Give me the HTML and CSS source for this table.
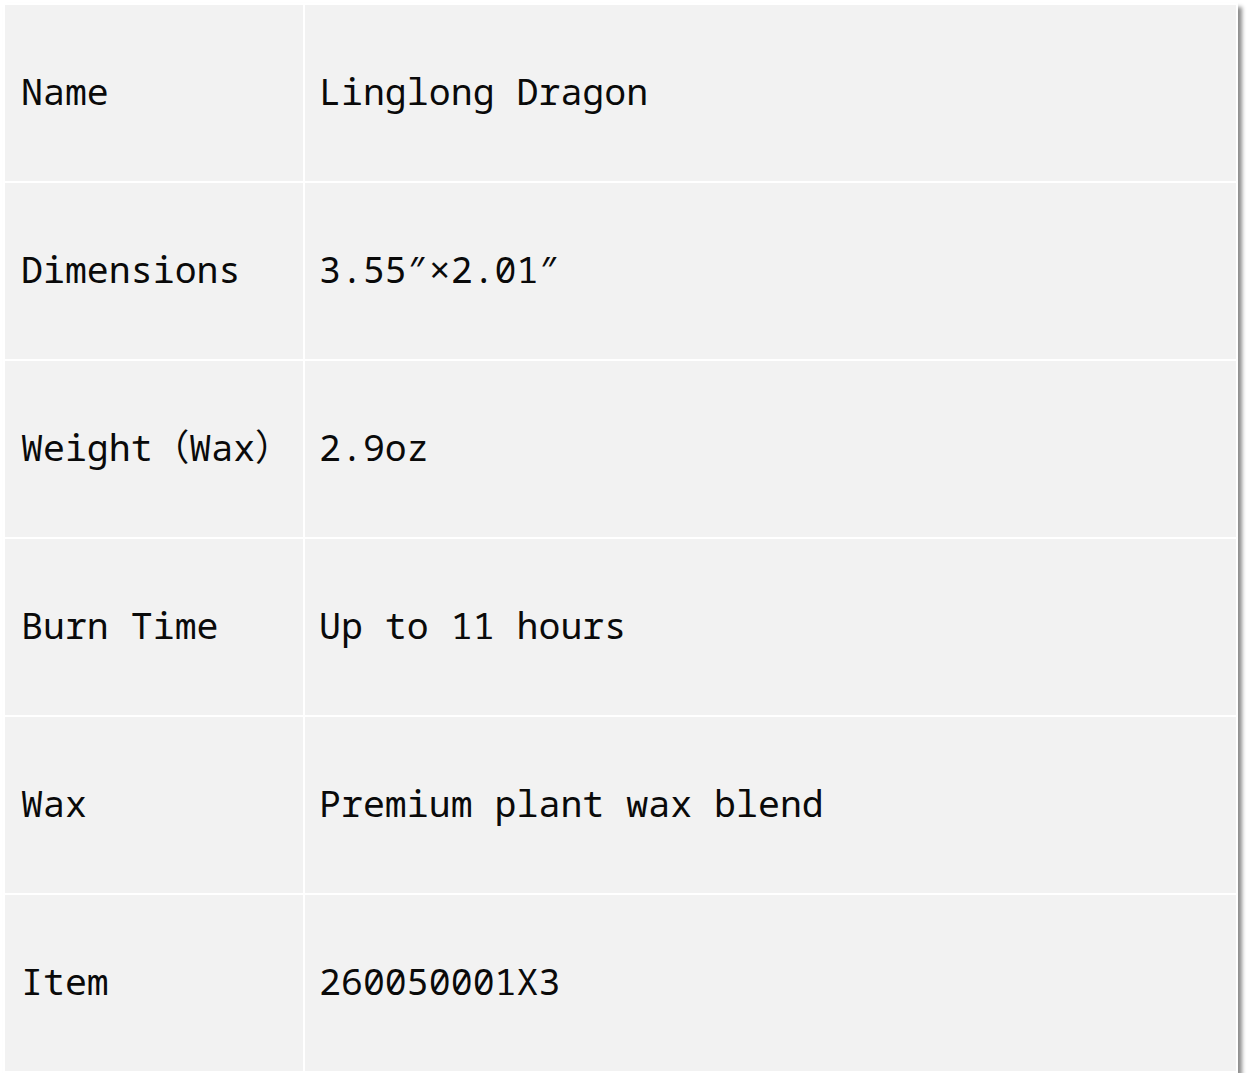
FILE: index.html
```html
<!DOCTYPE html>
<html>
<head>
<meta charset="utf-8">
<link rel="stylesheet" href="styles.css">
</head>
<body>
<div class="wrap">
<table class="spec">
<tr><td class="k">Name</td><td class="v">Linglong Dragon</td></tr>
<tr><td class="k">Dimensions</td><td class="v">3.55″×2.01″</td></tr>
<tr><td class="k">Weight（Wax）</td><td class="v">2.9oz</td></tr>
<tr><td class="k">Burn Time</td><td class="v">Up to 11 hours</td></tr>
<tr><td class="k">Wax</td><td class="v">Premium plant wax blend</td></tr>
<tr><td class="k">Item</td><td class="v">260050001X3</td></tr>
</table>
</div>
</body>
</html>
```
FILE: styles.css
```css
html, body {
  margin: 0;
  padding: 0;
  background: #ffffff;
}
.wrap {
  padding: 3px 0 0 3px;
}
.spec {
  width: 1235px;
  border-collapse: separate;
  border-spacing: 2px;
  background: #ffffff;
  box-shadow: 4px 4px 4px rgba(0, 0, 0, 0.45);
  font-family: "Noto Sans Mono", "DejaVu Sans Mono", "Noto Sans CJK SC", monospace;
  font-size: 36.6px;
  line-height: 44px;
  color: #0a0a0a;
}
.spec td {
  background: #f2f2f2;
  height: 176px;
  padding: 0 0 4px 16px;
  vertical-align: middle;
  box-sizing: border-box;
  white-space: nowrap;
}
.spec td.k {
  width: 298px;
}
.spec td.v {
  padding-left: 14px;
}
```
